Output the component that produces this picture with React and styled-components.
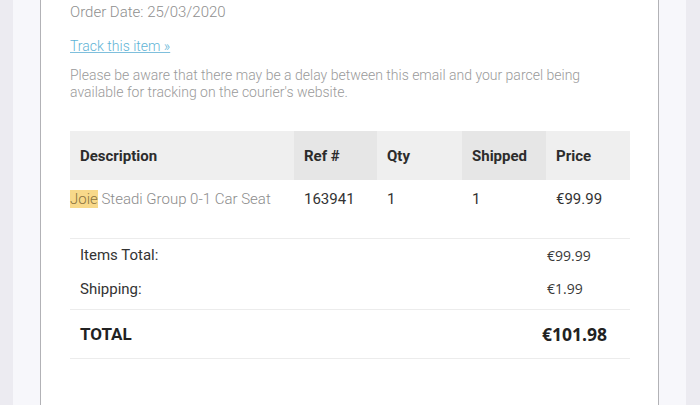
import React from "react";
import styled, { createGlobalStyle } from "styled-components";

const GlobalStyle = createGlobalStyle`
  html, body {
    margin: 0;
    padding: 0;
    background: #ecebf1;
    font-family: Roboto, "Liberation Sans", sans-serif;
  }
`;

const Page = styled.div`
  display: flex;
  width: 700px;
  height: 405px;
  overflow: hidden;
  background: #ecebf1;
`;

const Edge = styled.div`
  width: ${(p) => p.$w}px;
  flex-shrink: 0;
  background: #ecebf1;
`;

const Gutter = styled.div`
  width: ${(p) => p.$w}px;
  flex-shrink: 0;
  background: #f7f7fb;
`;

const Card = styled.div`
  width: 619px;
  flex-shrink: 0;
  background: #ffffff;
  border-left: 1.5px solid #b2b2b6;
  border-right: 1.5px solid #b2b2b6;
  padding: 2px 27px 0 29px;
  box-sizing: border-box;
`;

const Meta = styled.div`
  font-size: 15px;
  font-weight: 300;
  color: #8f8f8f;
  line-height: 20px;
`;

const TrackLink = styled.a`
  display: inline-block;
  margin-top: 14px;
  font-size: 14px;
  font-weight: 300;
  line-height: 20px;
  color: #5fb4d6;
  text-decoration: underline;
  text-decoration-color: #7fbfdc;
`;

const Note = styled.p`
  margin: 11px 0 0;
  font-size: 14px;
  font-weight: 300;
  line-height: 17px;
  color: #9a9a9a;
`;

const Table = styled.div`
  display: grid;
  grid-template-columns: 224px 83px 85px 84px 84px;
  width: 560px;
  margin-top: 30px;
`;

const HeadCell = styled.div`
  height: 49px;
  display: flex;
  align-items: center;
  padding-left: 10px;
  background: ${(p) => (p.$dark ? "#e6e6e6" : "#efefef")};
  font-size: 15px;
  font-weight: 700;
  color: #2c2c2c;
`;

const Cell = styled.div`
  height: 58px;
  box-sizing: border-box;
  padding: 10px 0 0 ${(p) => (p.$flush ? 0 : 10)}px;
  font-size: 15px;
  line-height: 18px;
  font-weight: 400;
  color: #333333;
`;

const ItemName = styled.span`
  font-weight: 300;
  color: #8c8c8c;
`;

const Highlight = styled.span`
  background: #f8d98a;
  color: #8a7440;
`;

const Totals = styled.div`
  width: 560px;
  border-top: 1px solid #ececec;
  padding-bottom: 3px;
`;

const TotalRow = styled.div`
  display: grid;
  grid-template-columns: 1fr 83px;
  align-items: center;
  height: ${(p) => p.$h}px;
  padding-left: 10px;
  font-size: 15px;
  color: #333333;
`;

const Amount = styled.span`
  font-family: "Open Sans", "Noto Sans", sans-serif;
  font-size: 14px;
  color: #3a3a3a;
`;

const GrandRow = styled(TotalRow)`
  width: 560px;
  box-sizing: border-box;
  border-top: 1px solid #ececec;
  border-bottom: 1px solid #ececec;
  grid-template-columns: 1fr 88px;
  font-size: 17px;
  font-weight: 700;
  color: #222222;
`;

const GrandAmount = styled.span`
  font-family: "Open Sans", "Noto Sans", sans-serif;
  font-size: 17.5px;
  font-weight: 700;
  color: #222222;
`;

const headers = [
  { label: "Description" },
  { label: "Ref #", dark: true },
  { label: "Qty" },
  { label: "Shipped", dark: true },
  { label: "Price" },
];

export default function App() {
  return (
    <>
      <GlobalStyle />
      <Page>
        <Edge $w={13} />
        <Gutter $w={27} />
        <Card>
          <Meta>Order Date: 25/03/2020</Meta>
          <TrackLink href="#">Track this item »</TrackLink>
          <Note>
            Please be aware that there may be a delay between this email and your parcel being
            available for tracking on the courier's website.
          </Note>
          <Table>
            {headers.map((h) => (
              <HeadCell key={h.label} $dark={h.dark}>
                {h.label}
              </HeadCell>
            ))}
            <Cell $flush>
              <ItemName>
                <Highlight>Joie</Highlight> Steadi Group 0-1 Car Seat
              </ItemName>
            </Cell>
            <Cell>163941</Cell>
            <Cell>1</Cell>
            <Cell>1</Cell>
            <Cell>€99.99</Cell>
          </Table>
          <Totals>
            <TotalRow $h={32}>
              <span>Items Total:</span>
              <Amount>€99.99</Amount>
            </TotalRow>
            <TotalRow $h={35}>
              <span>Shipping:</span>
              <Amount>€1.99</Amount>
            </TotalRow>
          </Totals>
          <GrandRow $h={50}>
            <span>TOTAL</span>
            <GrandAmount>€101.98</GrandAmount>
          </GrandRow>
        </Card>
        <Gutter $w={27} />
        <Edge $w={14} />
      </Page>
    </>
  );
}
